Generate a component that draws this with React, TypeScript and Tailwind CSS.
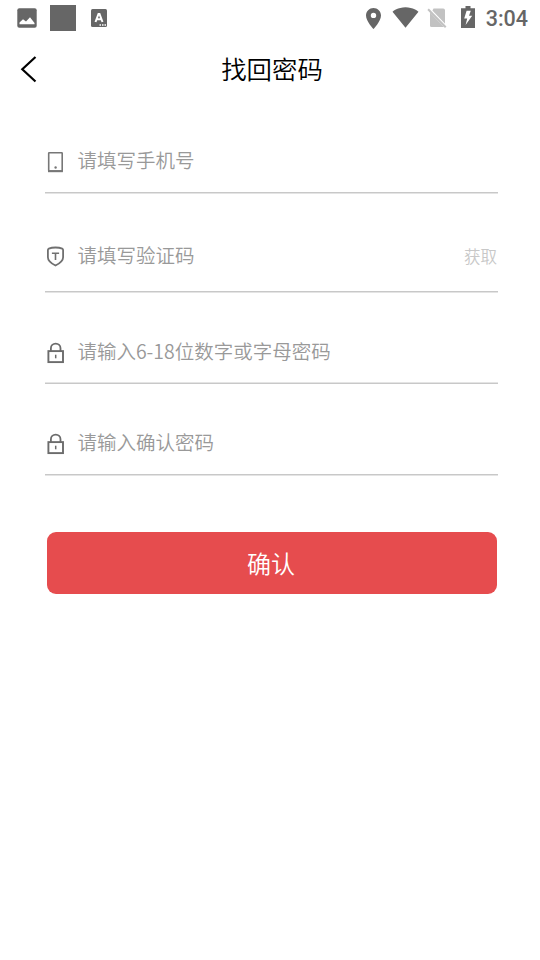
import type { ReactNode } from "react";

interface FieldProps {
    icon: ReactNode;
    placeholder: string;
    className: string;
    action?: string;
}

function StatusBar() {
    return (
        <div className="flex h-9 items-center justify-between pl-[17px] pr-3 text-[#666666]">
            <div className="flex items-center">
                <svg className="h-5 w-5" viewBox="0 0 20 20">
                    <rect x="0.3" y="0.3" width="19.4" height="19.4" rx="2" fill="currentColor" />
                    <path d="M2.5 16.3V14.5L6 11.2 9 13.6 13 9.3 17.5 15V16.3Z" fill="#fff" />
                </svg>
                <div className="ml-[13px] h-[26px] w-[26px] bg-[#666666]" />
                <svg className="ml-[15px] h-[18px] w-4" viewBox="0 0 16 18">
                    <rect width="16" height="18" rx="1.5" fill="currentColor" />
                    <path d="M4.5 13 7.5 4.9H8.5L11.5 13M5.6 10.2H10.4" fill="none" stroke="#fff" strokeWidth="2" />
                    <path d="M8.5 15.9h1.5M11 15.9h1.5M13.5 15.9H15" stroke="#fff" strokeWidth="1.5" />
                </svg>
            </div>
            <div className="flex items-center">
                <svg className="mr-[11px] h-[21px] w-[15px]" viewBox="0 0 15 21">
                    <path
                        d="M7.5 0C3.4 0 0 3.3 0 7.4 0 13 7.5 21 7.5 21S15 13 15 7.4C15 3.3 11.6 0 7.5 0Zm0 10.1a2.7 2.7 0 1 1 0-5.4 2.7 2.7 0 0 1 0 5.4Z"
                        fill="currentColor"
                    />
                </svg>
                <svg className="mr-2 -mt-px h-[21px] w-[27px]" viewBox="0 0 27 21">
                    <path d="M13.5 20.7 0.5 4.7C1.1 4.2 5.9 0.2 13.5 0.2S25.9 4.2 26.5 4.7Z" fill="currentColor" />
                </svg>
                <svg className="mr-[14px] h-[21px] w-5" viewBox="0 0 20 21">
                    <path d="M6.5 0.5H16.2Q18 0.5 18 2.2V16.8L5 3.3Z" fill="#c2c2c2" />
                    <path d="M3 4.5 17 19H4.6Q3 19 3 17.4Z" fill="#c2c2c2" />
                    <path d="M4.2 2.2 18.9 17.4" stroke="#fff" strokeWidth="1.2" />
                    <path d="M1.1 1.2 18.7 19.3" stroke="#c2c2c2" strokeWidth="2" />
                </svg>
                <svg className="mr-[11px] -mt-[2px] h-[22px] w-[14px]" viewBox="0 0 14 22">
                    <path d="M4.5 0h5v2.2H14V22H0V2.2h4.5Z" fill="currentColor" />
                    <path d="M9.8 4.8H5.6L3.2 12.4H6.2L4.6 19 11.2 9.8H8Z" fill="#fff" />
                </svg>
                <span className="pt-[2px] font-[Roboto] text-[21.5px] font-medium leading-none">3:04</span>
            </div>
        </div>
    );
}

function PhoneIcon() {
    return (
        <svg className="h-[22px] w-[18px]" viewBox="0 0 18 22" fill="none" stroke="#777">
            <rect x="1.7" y="1.7" width="13.5" height="18.3" rx="0.5" strokeWidth="1.6" />
            <path d="M1 20.2H15.9" strokeWidth="2" />
            <circle cx="8.6" cy="16.5" r="1.2" fill="#777" stroke="none" />
        </svg>
    );
}

function ShieldIcon() {
    return (
        <svg className="h-[22px] w-[18px]" viewBox="0 0 18 22" fill="none" stroke="#707070">
            <path
                d="M8.5 1.5C6.3 1.5 3.5 1.9 1.8 2.6Q0.9 3 0.9 4.1V11.3C0.9 15.1 5 17.8 8.5 19.5 12 17.8 16.1 15.1 16.1 11.3V4.1Q16.1 3 15.2 2.6C13.5 1.9 10.7 1.5 8.5 1.5Z"
                strokeWidth="1.8"
            />
            <path d="M4.9 7.2H12.1M8.5 7.2V14" strokeWidth="1.6" />
        </svg>
    );
}

function LockIcon() {
    return (
        <svg className="h-[22px] w-[18px]" viewBox="0 0 18 22" fill="none" stroke="#6c6c6c">
            <rect x="1.4" y="9.1" width="14.6" height="11" strokeWidth="1.9" />
            <path d="M3.9 9V6.2C3.9 3.5 6 1.6 8.7 1.6S13.5 3.5 13.5 6.2V9" strokeWidth="1.8" />
            <path d="M8.7 12.7V16.3" strokeWidth="1.5" />
        </svg>
    );
}

function Field({ icon, placeholder, className, action }: FieldProps) {
    return (
        <div className={`flex border-b border-[#c8c8c8] ${className}`}>
            <div className="mt-[4px] ml-[2px] h-[22px] w-[18px]">{icon}</div>
            <span className="-mt-px ml-[12.4px] text-[19.5px] leading-[28px] text-[#999999]">{placeholder}</span>
            {action && <button className="mr-px ml-auto h-[28px] text-[16.5px] leading-[26px] text-[#c8c8c8]">{action}</button>}
        </div>
    );
}

export default function App() {
    return (
        <div className="h-[960px] w-[540px] overflow-hidden bg-white font-['Noto_Sans_CJK_SC',sans-serif] font-[350]">
            <StatusBar />

            {/* Title bar */}
            <header className="grid h-[66px] grid-cols-[60px_1fr_60px] items-center">
                <button className="pl-5" aria-label="返回">
                    <svg className="h-7 w-[18px]" viewBox="0 0 18 28" fill="none" stroke="#000" strokeWidth="2.2">
                        <path d="M15.5 2 2.3 14.3 15.5 26.5" />
                    </svg>
                </button>
                <h1 className="pl-1 text-center text-[25.4px] leading-none text-black">找回密码</h1>
            </header>

            {/* Form */}
            <main className="flex flex-col pt-[45px] pl-[45px] pr-[42px]">
                <Field className="h-[46px] shadow-[0_1px_#e4e4e4]" icon={<PhoneIcon />} placeholder="请填写手机号" />
                <Field className="mt-[49px] h-[50px] shadow-[0_1px_#e4e4e4]" icon={<ShieldIcon />} placeholder="请填写验证码" action="获取" />
                <Field className="mt-[46px] h-[46px] shadow-[inset_0_-1px_#e4e4e4]" icon={<LockIcon />} placeholder="请输入6-18位数字或字母密码" />
                <Field className="mt-[45px] h-[46px] shadow-[0_1px_#e4e4e4]" icon={<LockIcon />} placeholder="请输入确认密码" />
                <button className="mt-[57px] mr-[1.5px] ml-[1.5px] h-[62px] rounded-[9px] bg-[#e64c4e] pr-px pb-px text-2xl text-white">
                    确认
                </button>
            </main>
        </div>
    );
}
